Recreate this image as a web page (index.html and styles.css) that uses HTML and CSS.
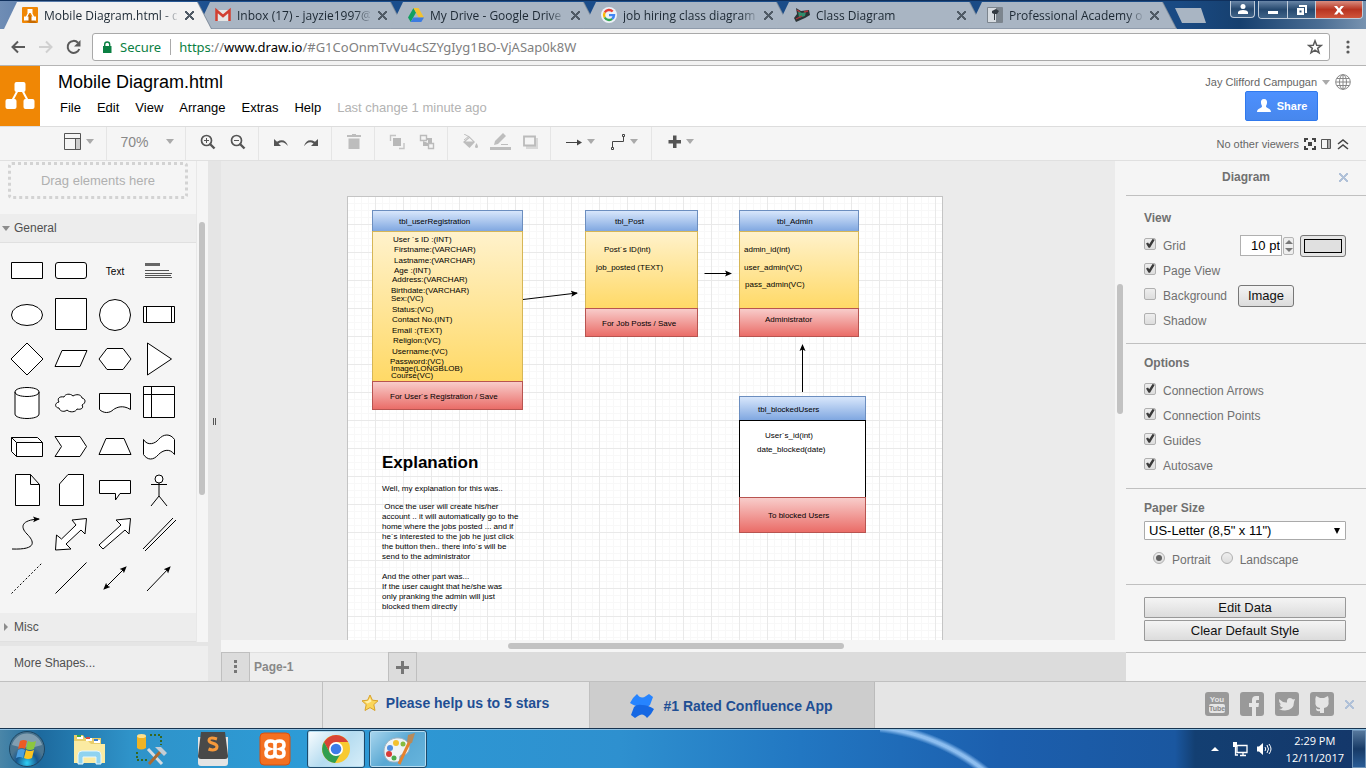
FILE: index.html
```html
<!DOCTYPE html>
<html lang="en">
<head>
<meta charset="utf-8">
<title>Mobile Diagram.html - draw.io</title>
<link rel="stylesheet" href="styles.css">
</head>
<body>
<svg class="defs" width="0" height="0" aria-hidden="true">
  <defs>
    <marker id="arrow" viewBox="0 0 8 8" refX="6" refY="4" markerWidth="8" markerHeight="8" markerUnits="userSpaceOnUse" orient="auto-start-reverse"><path d="M0 1L7 4L0 7L1.500 4Z"/></marker>
    <linearGradient id="blue" x2="0" y2="1"><stop stop-color="#dae8fc"/><stop offset="1" stop-color="#7ea6e0"/></linearGradient>
    <linearGradient id="yellow" x2="0" y2="1"><stop stop-color="#fff2cc"/><stop offset="1" stop-color="#ffd966"/></linearGradient>
    <linearGradient id="red" x2="0" y2="1"><stop stop-color="#f8cecc"/><stop offset="1" stop-color="#ea6b66"/></linearGradient>
  </defs>
</svg>

<div class="tabstrip">
  <div class="tabs">
    <div class="tab tab-active">
      <svg class="favicon" viewBox="0 0 16 16"><rect width="16" height="16" rx="1" fill="#f08705"/><path d="M6 6l9 10H8L2 13z" fill="#c76a00"/><path d="M7 5l-3 6M9 5l3 6" stroke="#fff" stroke-width="1.500"/><path d="M5.500 2h5v4h-5zM2 9.500h4.500v4H2zM9.500 9.500H14v4H9.500z" fill="#fff"/></svg>
      <span class="tab-title">Mobile Diagram.html - draw.io</span><button class="tab-close" aria-label="Close tab"></button>
    </div>
    <div class="tab">
      <svg class="favicon" viewBox="0 0 16 16"><path d="M1 3h14v11H1z" fill="#e5e5e5"/><path d="M1.500 14V3.500L8 9l6.500-5.500V14" fill="none" stroke="#d23f31" stroke-width="2.500"/></svg>
      <span class="tab-title">Inbox (17) - jayzie1997@gmail.com</span><button class="tab-close" aria-label="Close tab"></button>
    </div>
    <div class="tab">
      <svg class="favicon" viewBox="0 0 16 16"><path d="M5.500 1L0 10.500 2.700 15 8 5.500z" fill="#11a05f"/><path d="M5.500 1h5L16 10.500h-5.300z" fill="#f3c331"/><path d="M5.300 10.500H16L13.300 15H2.700z" fill="#3c7be0"/></svg>
      <span class="tab-title">My Drive - Google Drive</span><button class="tab-close" aria-label="Close tab"></button>
    </div>
    <div class="tab">
      <svg class="favicon" viewBox="0 0 16 16"><circle cx="8" cy="8" r="8" fill="#eef2f8"/><g fill="none" stroke-width="2.400"><path d="M11.700 4.500A5 5 0 0 0 3.700 5.500" stroke="#e94235"/><path d="M3.700 5.500a5 5 0 0 0 0 5" stroke="#fabb05"/><path d="M3.700 10.500a5 5 0 0 0 7.500 1.300" stroke="#34a853"/><path d="M11.200 11.800A5 5 0 0 0 13 8.100H8" stroke="#4285f4"/></g></svg>
      <span class="tab-title">job hiring class diagram example</span><button class="tab-close" aria-label="Close tab"></button>
    </div>
    <div class="tab">
      <svg class="favicon" viewBox="0 0 16 16"><path d="M2 1l5 3 8-1 1 5-5 3-9 4-2-4 3-4z" fill="#2b3436"/><path d="M4 4l4 2 4-1-1 4-6 2z" fill="#2f8c6c"/><path d="M3 3l3 2M10 5l4-1M2 12l6-3" stroke="#b2313a" stroke-width="1.300"/></svg>
      <span class="tab-title">Class Diagram</span><button class="tab-close" aria-label="Close tab"></button>
    </div>
    <div class="tab">
      <svg class="favicon" viewBox="0 0 16 16"><rect width="16" height="16" rx="1" fill="#7c858e"/><rect x="1" y="1" width="8" height="14" fill="#d6dbe0"/><path d="M5 4l4-2 3 2-2 3H8v6H7V7L5 6z" fill="#333a42"/></svg>
      <span class="tab-title">Professional Academy of Design</span><button class="tab-close" aria-label="Close tab"></button>
    </div>
    <button class="new-tab" aria-label="New tab"></button>
  </div>
  <div class="window-controls">
    <button class="wc wc-user" aria-label="Profile"><svg width="12" height="12" viewBox="0 0 12 12"><circle cx="6" cy="3.500" r="2.500"/><path d="M1 11V9q1-2 5-2t5 2v2z"/></svg></button>
    <div class="wc-group">
      <button class="wc" aria-label="Minimize"><svg width="12" height="12" viewBox="0 0 12 12"><path d="M1 7h10v3H1z"/></svg></button>
      <button class="wc" aria-label="Restore"><svg width="12" height="12" viewBox="0 0 12 12"><path d="M3 1h8v8H9V3H3zM1 4h7v7H1zM3.500 6.500v2h2v-2z" fill-rule="evenodd"/></svg></button>
      <button class="wc wc-close" aria-label="Close"><svg width="12" height="12" viewBox="0 0 12 12"><path d="M1 2h3l2 2.500L8 2h3L7.700 6 11 10.500H8L6 8l-2 2.500H1L4.300 6z"/></svg></button>
    </div>
  </div>
</div>

<div class="addressbar">
  <button class="nav" aria-label="Back"><svg width="16" height="16" viewBox="0 0 16 16"><path d="M15 8H3M8 2.500L2.500 8 8 13.500" stroke="#5a5a5a"/></svg></button>
  <button class="nav" aria-label="Forward"><svg width="16" height="16" viewBox="0 0 16 16"><path d="M1 8h12M8 2.500L13.500 8 8 13.500" stroke="#d0d0d0"/></svg></button>
  <button class="nav" aria-label="Reload"><svg width="16" height="16" viewBox="0 0 16 16"><path d="M13.300 10A6 6 0 1 1 12 3.700" stroke="#5a5a5a"/><path d="M14.500 1v6.500H8z" fill="#5a5a5a"/></svg></button>
  <div class="urlbox">
    <svg class="lock" width="10" height="12" viewBox="0 0 10 12"><path d="M1 5h8.500v7H1z" fill="#0b8043"/><path d="M2.700 5V3.500a2.500 2.500 0 0 1 5 0V5" fill="none" stroke="#0b8043" stroke-width="1.400"/></svg>
    <span class="secure">Secure</span>
    <span class="url"><span class="scheme">https</span>://<span class="host">www.draw.io</span>/#G1CoOnmTvVu4cSZYgIyg1BO-VjASap0k8W</span>
    <svg class="star" width="16" height="16" viewBox="0 0 16 16"><path d="M8 1.800l1.700 4.400 4.700.2-3.700 2.900 1.300 4.500L8 11.200l-4 2.600 1.300-4.500L1.600 6.400l4.700-.2z" fill="none" stroke="#5a5a5a" stroke-width="1.500"/></svg>
  </div>
  <button class="kebab" aria-label="Menu"><svg width="4" height="14" viewBox="0 0 4 14" fill="#5a5a5a"><circle cx="2" cy="2" r="1.600"/><circle cx="2" cy="7" r="1.600"/><circle cx="2" cy="12" r="1.600"/></svg></button>
</div>

<header class="header">
  <a class="logo" href="#" aria-label="draw.io"><svg width="32" height="32" viewBox="0 0 32 32"><path d="M15 9L8 22M17 9l7 13" stroke="#fff" stroke-width="2"/><g fill="#fff"><rect x="10.500" y="3" width="11" height="10" rx="2"/><rect x="1.500" y="20" width="11" height="10" rx="2"/><rect x="19.500" y="20" width="11" height="10" rx="2"/></g></svg></a>
  <div class="header-main">
    <h1 class="doc-title">Mobile Diagram.html</h1>
    <nav class="menu"><a href="#">File</a><a href="#">Edit</a><a href="#">View</a><a href="#">Arrange</a><a href="#">Extras</a><a href="#">Help</a><span class="status">Last change 1 minute ago</span></nav>
  </div>
  <div class="account">
    <div class="account-row"><a href="#">Jay Clifford Campugan</a><i class="caret"></i>
      <svg width="16" height="16" viewBox="0 0 16 16" fill="none" stroke="#888"><circle cx="8" cy="8" r="7.300"/><ellipse cx="8" cy="8" rx="3.500" ry="7.300"/><path d="M8 1v14M1 8h14M2 4.500h12M2 11.500h12"/></svg></div>
    <button class="share"><svg width="16" height="16" viewBox="0 0 16 16" fill="#fff"><path d="M8 1c2.500 0 3.300 1.800 3 4-.2 1.800-1 2.600-1 3.500 0 1.800 5 1.600 5 5.500H1c0-3.900 5-3.700 5-5.500 0-.9-.8-1.700-1-3.500-.3-2.200.5-4 3-4z"/></svg>Share</button>
  </div>
</header>

<div class="toolbar">
  <div class="group group-first"><button class="tool tool-wide" aria-label="View"><svg width="18" height="18" viewBox="0 0 18 18"><path d="M12 6h5v11h-5z" fill="#ccc"/><path d="M.500.500h16v16H.500zM0 5.500h17M11.500 6v11" fill="none" stroke="#555"/></svg><i class="caret"></i></button></div>
  <div class="group"><button class="tool tool-zoom">70%<i class="caret"></i></button></div>
  <div class="group">
    <button class="tool" aria-label="Zoom in"><svg width="16" height="16" viewBox="0 0 16 16"><path d="M9.500 9.500l5 5" stroke="#555" stroke-width="2.400"/><circle cx="6.500" cy="6.500" r="5" fill="none" stroke="#555" stroke-width="1.700"/><path d="M4 6.500h5M6.500 4v5" stroke="#555"/></svg></button>
    <button class="tool" aria-label="Zoom out"><svg width="16" height="16" viewBox="0 0 16 16"><path d="M9.500 9.500l5 5" stroke="#555" stroke-width="2.400"/><circle cx="6.500" cy="6.500" r="5" fill="none" stroke="#555" stroke-width="1.700"/><path d="M4 6.500h5" stroke="#555"/></svg></button>
  </div>
  <div class="group">
    <button class="tool" aria-label="Undo"><svg width="16" height="12" viewBox="0 0 16 12" fill="#555"><path d="M1 3v7h7L5.500 7.500Q10 4 15 10 12 1.500 4 5.700z"/></svg></button>
    <button class="tool" aria-label="Redo"><svg width="16" height="12" viewBox="0 0 16 12" fill="#555"><path d="M15 3v7H8l2.500-2.500Q6 4 1 10 4 1.500 12 5.700z"/></svg></button>
  </div>
  <div class="group"><button class="tool" aria-label="Delete"><svg width="14" height="16" viewBox="0 0 14 16" fill="#bdbdbd"><path d="M5 0h4v1h5v2H0V1h5zM1.500 4.500h11V15h-11z"/></svg></button></div>
  <div class="group">
    <button class="tool" aria-label="To front"><svg width="16" height="16" viewBox="0 0 16 16"><path d="M4 4h8v8H4z" fill="#b8b8b8"/><path d="M7 1.500H1.500V7M10 14.500h5V9" fill="none" stroke="#c4c4c4" stroke-width="1.400"/></svg></button>
    <button class="tool" aria-label="To back"><svg width="16" height="16" viewBox="0 0 16 16"><path d="M7 4h6v6H9V6H7zM4 7v5h5V9z" fill="#b8b8b8"/><path d="M1.500 1.500h6v5h-6zM9.500 9.500h5v5h-5z" fill="#f5f5f5" stroke="#bbb" stroke-width="1.400"/></svg></button>
  </div>
  <div class="group">
    <button class="tool" aria-label="Fill color"><svg width="18" height="16" viewBox="0 0 18 16" fill="#bdbdbd"><path d="M2 8l6.500-5.500L14 8l-5.500 6z"/><path d="M8.500 3L3 0M8 2L3 6" fill="none" stroke="#bdbdbd"/><path d="M15.500 9q3 5 0 5t0-5z"/><path d="M4.500 7.500l4-3.500 3.500 3.500z" fill="#f5f5f5"/></svg></button>
    <button class="tool" aria-label="Line color"><svg width="22" height="20" viewBox="0 0 22 20" fill="#bdbdbd"><path d="M5 13l1-4 8-8 3 3-8 8zM1 15h21v3H1zM12 12h7v1h-7z"/></svg></button>
    <button class="tool" aria-label="Shadow"><svg width="16" height="16" viewBox="0 0 16 16"><path d="M4 4h12v11H4z" fill="#d8d8d8"/><path d="M2 2.500h11v9H2z" fill="#f5f5f5" stroke="#bbb" stroke-width="1.800"/></svg></button>
  </div>
  <div class="group">
    <button class="tool tool-wide" aria-label="Connection"><svg width="18" height="8" viewBox="0 0 18 8"><path d="M1 4.500h13" stroke="#444"/><path d="M12 1.500l5 3-5 3z" fill="#444"/></svg><i class="caret"></i></button>
    <button class="tool tool-wide" aria-label="Waypoints"><svg width="16" height="16" viewBox="0 0 16 16" fill="none" stroke="#444"><path d="M2.500 13V7.500h11V3M1.500 13.500h2v2h-2zM12.500.500h2v2h-2z"/></svg><i class="caret"></i></button>
  </div>
  <div class="group group-last"><button class="tool tool-wide" aria-label="Insert"><svg width="14" height="14" viewBox="0 0 14 14"><path d="M5 .500h3.500V5H13v3.500H8.500V13H5V8.500H.500V5H5z" fill="#555"/></svg><i class="caret"></i></button></div>
  <div class="viewers">No other viewers
    <svg width="12" height="12" viewBox="0 0 12 12" fill="#444"><path d="M0 0h4v2H2v2H0zM8 0h4v4h-2V2H8zM0 8h2v2h2v2H0zM10 8h2v4H8v-2h2zM4 4h4v4H4z"/></svg>
    <svg width="11" height="12" viewBox="0 0 11 12"><path d="M6 1h4v9H6z" fill="#aaa"/><path d="M.500 1.500h9v9h-9zM6.500 1v10" fill="none" stroke="#555"/></svg>
    <svg width="12" height="12" viewBox="0 0 12 12" fill="none" stroke="#444" stroke-width="1.600"><path d="M1 6l5-4 5 4M1 11l5-4 5 4"/></svg>
  </div>
</div>

<main class="workspace">
  <aside class="sidebar">
    <div class="palette-scroll">
      <div class="palette">
        <div class="dropzone">Drag elements here</div>
        <button class="section-head"><i class="tri tri-open"></i>General</button>
        <div class="shapes">
          <svg viewBox="-17 -17 34 34"><path d="M-15.500-8.500h31v16h-31z"/></svg>
          <svg viewBox="-17 -17 34 34"><rect x="-15.500" y="-8.500" width="31" height="16" rx="2.500"/></svg>
          <div class="text-shape">Text</div>
          <svg viewBox="-17 -17 34 34"><g stroke="none" fill="#333"><path d="M-14-8h15v3h-15z" fill="#666"/><path d="M-14-1h24v1h-24zM-14 2h27v1h-27zM-14 4h26v1h-26zM-14 6h27v1h-27z" fill="#555"/></g></svg>
          <svg viewBox="-17 -17 34 34"><ellipse rx="15.500" ry="10.500"/></svg>
          <svg viewBox="-17 -17 34 34"><path d="M-15.500-16.500h31v31h-31z"/></svg>
          <svg viewBox="-17 -17 34 34"><circle r="15.500"/></svg>
          <svg viewBox="-17 -17 34 34"><path d="M-15.500-8.500h31v16h-31zM-12.500-8.500v16M12.500-8.500v16"/></svg>
          <svg viewBox="-17 -17 34 34"><path d="M0-16L16 0 0 16-16 0z"/></svg>
          <svg viewBox="-17 -17 34 34"><path d="M-9-8.500h25L9 7.500h-25z"/></svg>
          <svg viewBox="-17 -17 34 34"><path d="M-16 0l8-10.500H8L16 0 8 10.500H-8z"/></svg>
          <svg viewBox="-17 -17 34 34"><path d="M-11.500-16l24 16-24 16z"/></svg>
          <svg viewBox="-17 -17 34 34"><path d="M-12-11v22c0 6 24 6 24 0v-22c0-6-24-6-24 0c0 6 24 6 24 0"/></svg>
          <svg viewBox="-17 -17 34 34"><path d="M-7-6c-5-1-7 2-5 5-5 1-4 6 0 6 1 4 6 4 8 2 3 3 9 2 10-1 4 1 7-1 5-4 4-2 4-6 0-7-1-4-6-4-9-2-3-3-8-2-9 1z"/></svg>
          <svg viewBox="-17 -17 34 34"><path d="M-15.500-9.500h31v16c-8-5-14-2-17 0-4 4-10 4-14 0z"/></svg>
          <svg viewBox="-17 -17 34 34"><path d="M-15.500-16.500h31v31h-31zM-7.500-16.500v31M-15.500-8.500h31"/></svg>
          <svg viewBox="-17 -17 34 34"><path d="M-15.500-9.500h26l5 5v14h-26l-5-5zM-15.500-9.500l5 5h26M-10.500-4.500v14"/></svg>
          <svg viewBox="-17 -17 34 34"><path d="M-16-10.500H9L15.500-.5 9 9.500h-25L-9.500-.5z"/></svg>
          <svg viewBox="-17 -17 34 34"><path d="M-9-8.500H9l7 16h-32z"/></svg>
          <svg viewBox="-17 -17 34 34"><path d="M-15.500-7.500c4 7 12 4 15 0 5-6 12-6 16 0v15c-5-7-12-4-16 0-5 6-11 6-15 0z"/></svg>
          <svg viewBox="-17 -17 34 34"><path d="M-11.500-16.500h15l9 10v21h-24zM3.500-16.500v10h9"/></svg>
          <svg viewBox="-17 -17 34 34"><path d="M-3-16.500h15.500v31h-24V-7z"/></svg>
          <svg viewBox="-17 -17 34 34"><path d="M-15.500-10.500h31v13H5L.500 9V2.500h-16z"/></svg>
          <svg viewBox="-17 -17 34 34"><circle cy="-12" r="4"/><path d="M0-8V5M-8-6.500H8M0 5l-8 10M0 5l8 10"/></svg>
          <svg viewBox="-17 -17 34 34" class="line"><path d="M-15 14C11 15 7 6 0-1S-6-15 12-16" marker-end="url(#arrow)"/></svg>
          <svg viewBox="-17 -17 34 34"><path d="M15.500-16.500L14-1l-4-4L-5 9l5 5-15.500 1 1-15 5 4L5-10l-4-5z"/></svg>
          <svg viewBox="-17 -17 34 34"><path d="M15.500-16.500L14-1l-4-4-22 19-4-4L6-10 1-15z"/></svg>
          <svg viewBox="-17 -17 34 34" class="line"><path d="M-16 14l30-31M-14 16l31-31"/></svg>
          <svg viewBox="-17 -17 34 34" class="line"><path d="M-15.500 14.500l31-31" stroke-dasharray="2 2"/></svg>
          <svg viewBox="-17 -17 34 34" class="line"><path d="M-15.500 14.500l31-31"/></svg>
          <svg viewBox="-17 -17 34 34" class="line"><path d="M-11 10L11-12" marker-start="url(#arrow)" marker-end="url(#arrow)"/></svg>
          <svg viewBox="-17 -17 34 34" class="line"><path d="M-12 12l23-24" marker-end="url(#arrow)"/></svg>
        </div>
        <button class="section-head"><i class="tri tri-closed"></i>Misc</button>
      </div>
      <div class="vscroll"><div class="vthumb vthumb-side"></div></div>
    </div>
    <a class="more-shapes" href="#">More Shapes...</a>
  </aside>
  <div class="splitter"><i></i><i></i></div>

  <section class="editor">
    <div class="canvas-row">
      <div class="canvas">
        <div class="paper">
          <svg class="diagram" width="594" height="462" viewBox="348 197 594 462">
            <g stroke="#6c8ebf" fill="url(#blue)"><rect x="372.500" y="210.500" width="150" height="21"/><rect x="585.500" y="210.500" width="112" height="21"/><rect x="739.500" y="210.500" width="119" height="21"/><rect x="739.500" y="396.500" width="126" height="24"/></g>
            <g stroke="#d6b656" fill="url(#yellow)"><rect x="372.500" y="231.500" width="150" height="150"/><rect x="585.500" y="231.500" width="112" height="77"/><rect x="739.500" y="231.500" width="119" height="77"/></g>
            <rect x="739.500" y="420.500" width="126" height="77" fill="#fff" stroke="#000"/>
            <g stroke="#b85450" fill="url(#red)"><rect x="372.500" y="381.500" width="150" height="28"/><rect x="585.500" y="308.500" width="112" height="28"/><rect x="739.500" y="308.500" width="119" height="28"/><rect x="739.500" y="497.500" width="126" height="35"/></g>
            <g stroke="#000" fill="none"><path d="M523 299.500L577 293" marker-end="url(#arrow)"/><path d="M704.500 273.500H731" marker-end="url(#arrow)"/><path d="M802.500 392V345" marker-end="url(#arrow)"/></g>
            <g class="labels">
              <text x="399" y="224">tbl_userRegistration</text>
              <text x="393" y="242">User ´s ID :(INT)</text>
              <text x="394" y="252">Firstname:(VARCHAR)</text>
              <text x="394" y="263">Lastname:(VARCHAR)</text>
              <text x="394" y="273">Age :(INT)</text>
              <text x="392" y="282">Address:(VARCHAR)</text>
              <text x="391" y="293">Birthdate:(VARCHAR)</text>
              <text x="391" y="301">Sex:(VC)</text>
              <text x="392" y="312">Status:(VC)</text>
              <text x="392" y="322">Contact No.(INT)</text>
              <text x="392" y="333">Email :(TEXT)</text>
              <text x="393" y="343">Religion:(VC)</text>
              <text x="392" y="354">Username:(VC)</text>
              <text x="390" y="364">Password:(VC)</text>
              <text x="391" y="371">Image(LONGBLOB)</text>
              <text x="391" y="378">Course(VC)</text>
              <text x="390" y="399">For User´s Registration / Save</text>
              <text x="615" y="224">tbl_Post</text>
              <text x="604" y="252">Post´s ID(int)</text>
              <text x="596" y="270">job_posted (TEXT)</text>
              <text x="602" y="326">For Job Posts / Save</text>
              <text x="777" y="224">tbl_Admin</text>
              <text x="744" y="252">admin_id(int)</text>
              <text x="744" y="270">user_admin(VC)</text>
              <text x="745" y="287">pass_admin(VC)</text>
              <text x="765" y="322">Administrator</text>
              <text x="758" y="412">tbl_blockedUsers</text>
              <text x="765" y="438">User´s_id(int)</text>
              <text x="757" y="452">date_blocked(date)</text>
              <text x="768" y="518">To blocked Users</text>
            </g>
          </svg>
          <div class="note">
            <h2>Explanation</h2>
            <p>Well, my explanation for this was..</p>
            <p>&nbsp;Once the user will create his/her<br>account .. it will automatically go to the<br>home where the jobs posted ... and if<br>he´s interested to the job he just click<br>the button then.. there info´s will be<br>send to the administrator<br><br>And the other part was...<br>If the user caught that he/she was<br>only pranking the admin will just<br>blocked them directly</p>
          </div>
        </div>
      </div>
      <div class="vscroll"><div class="vthumb vthumb-canvas"></div></div>
    </div>
    <div class="hscroll"><div class="hthumb"></div></div>
    <div class="pages">
      <button class="page-btn" aria-label="Pages"><svg width="4" height="14" viewBox="0 0 4 14" fill="#777"><path d="M0 0h3v3H0zM0 5h3v3H0zM0 10h3v3H0z"/></svg></button>
      <button class="page-tab">Page-1</button>
      <button class="page-btn" aria-label="Add page"><svg width="13" height="13" viewBox="0 0 13 13"><path d="M5 0h3v5h5v3H8v5H5V8H0V5h5z" fill="#777"/></svg></button>
    </div>
  </section>

  <aside class="format">
    <div class="format-head"><span>Diagram</span><button class="format-close" aria-label="Close panel"></button></div>
    <section class="panel panel-view">
      <h3>View</h3>
      <div class="row"><label><input type="checkbox" checked>Grid</label>
        <div class="grid-size"><input class="num" type="text" value="10 pt" aria-label="Grid size"><button class="stepper" aria-label="Change grid size"><i class="up"></i><i class="down"></i></button></div>
        <button class="swatch" aria-label="Grid color"><span></span></button></div>
      <div class="row"><label><input type="checkbox" checked>Page View</label></div>
      <div class="row"><label><input type="checkbox">Background</label><button class="btn image-btn">Image</button></div>
      <div class="row"><label><input type="checkbox">Shadow</label></div>
    </section>
    <section class="panel panel-options">
      <h3>Options</h3>
      <div class="row"><label><input type="checkbox" checked>Connection Arrows</label></div>
      <div class="row"><label><input type="checkbox" checked>Connection Points</label></div>
      <div class="row"><label><input type="checkbox" checked>Guides</label></div>
      <div class="row"><label><input type="checkbox" checked>Autosave</label></div>
    </section>
    <section class="panel panel-paper">
      <h3><label for="paper">Paper Size</label></h3>
      <div class="select"><select id="paper"><option>US-Letter (8,5" x 11")</option></select></div>
      <div class="radios"><label><input type="radio" name="orient" checked>Portrait</label><label><input type="radio" name="orient">Landscape</label></div>
    </section>
    <section class="panel panel-actions"><button class="btn">Edit Data</button><button class="btn">Clear Default Style</button></section>
  </aside>
</main>

<footer class="promo">
  <a class="promo-item promo-stars" href="#"><svg width="18" height="18" viewBox="0 0 18 18"><path d="M9 1l2.400 5.200 5.600.6-4.200 3.800 1.200 5.900L9 13.600l-5 2.900 1.200-5.900L1 6.800l5.600-.6z" fill="#fbd65a" stroke="#d9a32b"/><path d="M9 4l1.500 3.500-4 2L3.500 7.500l3.500-.5z" fill="#fff0b0"/></svg>Please help us to 5 stars</a>
  <a class="promo-item promo-app" href="#"><svg width="26" height="26" viewBox="0 0 26 26"><path d="M4 5L8 1q4 6 9 2l3-2 4 3-3 8q-3 3-8 2-6 0-12-4z" fill="#2684ff"/><path d="M22 21l-4 4q-4-6-9-2l-3 2-4-3 3-8q3-3 8-2 6 0 12 4z" fill="#1668e3"/></svg>#1 Rated Confluence App</a>
  <div class="social">
    <a href="#" aria-label="YouTube"><svg viewBox="0 0 24 24"><rect width="24" height="24" rx="3" fill="#999"/><rect x="4" y="12" width="16" height="9" rx="2" fill="#e5e5e5"/><text x="12" y="10" class="yt yt-top">You</text><text x="12" y="19" class="yt yt-bot">Tube</text></svg></a>
    <a href="#" aria-label="Facebook"><svg viewBox="0 0 24 24"><rect width="24" height="24" rx="3" fill="#999"/><path d="M12 24v-9H9v-4h3V8q0-4 4-4h3v4h-2q-1 0-1 1v2h3l-.500 4H16v9z" fill="#e5e5e5"/></svg></a>
    <a href="#" aria-label="Twitter"><svg viewBox="0 0 24 24"><rect width="24" height="24" rx="3" fill="#999"/><path d="M4 7q4 4 8 3.500Q11.500 6 15 6q2 0 3 1.500l2-.5-1 3Q19 18 10 18.500 7 18.500 4 17q3 0 4-1.500-3-.500-3.500-3h1.500Q3.500 10 4 7z" fill="#e5e5e5"/></svg></a>
    <a href="#" aria-label="GitHub"><svg viewBox="0 0 24 24"><rect width="24" height="24" rx="3" fill="#999"/><path d="M6 4l4 2h4l4-2q1 3 .5 5 1 6-4.500 7v5h-4v-2q-4 1-4-3 2 2 4 1V16Q4.500 15 5.500 9 5 7 6 4z" fill="#e5e5e5"/></svg></a>
    <button class="format-close promo-close" aria-label="Dismiss"></button>
  </div>
</footer>

<div class="taskbar">
  <button class="start" aria-label="Start"><svg width="38" height="38" viewBox="0 0 38 38"><defs><radialGradient id="orb" cy=".9"><stop stop-color="#2fd0f5"/><stop offset=".6" stop-color="#17578f"/><stop offset="1" stop-color="#4b7590"/></radialGradient></defs><circle cx="19" cy="19" r="17.500" fill="url(#orb)" stroke="#1c4663"/><path d="M4 15a15.500 15.500 0 0 1 30 0q-15 5-30 0z" fill="#fff" opacity=".3"/><path d="M12 11q4-2 7 0l-2 8q-3-2-7 0z" fill="#ee5a24"/><path d="M20 11q4 2 8 0l-2 8q-4 2-8 0z" fill="#8cc63f"/><path d="M10 20q4-2 7 0l-2 8q-3-2-7 0z" fill="#4b9fe0"/><path d="M18 20q4 2 8 0l-2 8q-4 2-8 0z" fill="#fcc421"/></svg></button>
  <button class="app" aria-label="Explorer"><svg width="34" height="34" viewBox="0 0 34 34"><path d="M2 7V3h9l2 3h16v25H2z" fill="#e9cd6a"/><path d="M5 4h6v3H5zM14 6h6v3h-6zM22 8h6v3h-6z" fill="#fff"/><path d="M5 3h4v2H5z" fill="#39a845"/><path d="M14 5h4v2h-4z" fill="#d94b3e"/><path d="M22 7h4v2h-4z" fill="#3a7bd0"/><path d="M2 9h14l3 3h14v19H2z" fill="#fbeba2"/><path d="M6 32v-9q0-4 4-4h15q4 0 4 4v9h-5v-7H11v7z" fill="#8fd3f0" stroke="#e6f7fd"/></svg></button>
  <button class="app" aria-label="Database tools"><svg width="34" height="34" viewBox="0 0 34 34"><path d="M3 4v12q4 3 9 0V4z" fill="#f0b323"/><ellipse cx="7.500" cy="4" rx="4.500" ry="2" fill="#ffe08a"/><path d="M16 3h11v10M3 20v8h10" fill="none" stroke="#37671f" stroke-width="2" stroke-dasharray="2 2"/><path d="M14 17l14 15" stroke="#d5dbe0" stroke-width="3"/><path d="M27 19L15 32" stroke="#a96a31" stroke-width="3"/><path d="M21 15h6l6 6-3 3-4-4z" fill="#c5cdd4"/></svg></button>
  <button class="app" aria-label="Sublime Text"><svg width="32" height="36" viewBox="0 0 32 36"><path d="M1 6h30v26q0 3-3 3H4q-3 0-3-3z" fill="#e4e4e4"/><path d="M4 1h24l3 24q0 3-3 3H4q-3 0-3-3z" fill="#494949"/><path d="M20 8q-8-2.500-8 1.500c0 3.500 8 2 8 6s-5 4-8.500 2.500" fill="none" stroke="#f5983b" stroke-width="3"/></svg></button>
  <button class="app" aria-label="XAMPP"><svg width="32" height="34" viewBox="0 0 32 34"><rect x="1" y="1" width="30" height="32" rx="4" fill="#f37021" stroke="#d8500f"/><path d="M16 12Q16 9 11.500 9T7 13q0 3 3 4-3 1-3 4 0 4 4.500 4T16 21V12Q16 9 20.500 9T25 13q0 3-3 4 3 1 3 4 0 4-4.500 4T16 21" fill="none" stroke="#fff" stroke-width="3.600"/></svg></button>
  <button class="task task-active" aria-label="Chrome"><svg width="30" height="30" viewBox="0 0 30 30"><circle cx="15" cy="15" r="14" fill="#f8ca32"/><path d="M3 8a14 14 0 0 1 24.200 0H15L9 19z" fill="#d94436"/><path d="M3 8a14 14 0 0 0 11 21l6-10-5 2-6-2z" fill="#2f9e50"/><circle cx="15" cy="15" r="7" fill="#fff"/><circle cx="15" cy="15" r="5.300" fill="#3c7ce8"/></svg></button>
  <button class="task" aria-label="Paint"><svg width="34" height="34" viewBox="0 0 34 34"><path d="M15 6C26 5 31 14 27 20c-3 5-6 1-8 4-1 3 1 6-4 6C6 31 3 25 3 19S7 7 15 6z" fill="#eef3f6" stroke="#9eb2c0"/><circle cx="15" cy="11" r="3" fill="#f3c02f"/><circle cx="22" cy="12" r="2.500" fill="#86bb3f"/><circle cx="9" cy="16" r="3" fill="#4f8de0"/><circle cx="8" cy="22" r="3" fill="#d83b36"/><circle cx="13" cy="26" r="2.500" fill="#4aaa4c"/><path d="M29 9L18 32" stroke="#e3822e" stroke-width="3"/><path d="M26 10l1-7 7-2-3 10z" fill="#b78a5a"/></svg></button>
  <div class="tray">
    <svg width="8" height="6" viewBox="0 0 8 6"><path d="M0 5l4-4 4 4z" fill="#fff"/></svg>
    <svg width="16" height="16" viewBox="0 0 16 16"><path d="M5 4.500h10v7H5zM8 14.500h6M11 12v2M3.500 6v8H6" fill="none" stroke="#fff" stroke-width="1.300"/><path d="M1 1h4v5H1z" fill="#fff"/></svg>
    <svg width="16" height="16" viewBox="0 0 16 16"><path d="M1 5.500h2L7 2v12l-4-3.500H1z" fill="#fff"/><path d="M9 6q1.500 2 0 4M11 4q3 4 0 8M13 3q4 5 0 10" fill="none" stroke="#fff"/></svg>
    <div class="clock">2:29 PM<br>12/11/2017</div>
  </div>
  <button class="show-desktop" aria-label="Show desktop"></button>
</div>
</body>
</html>
```
FILE: styles.css
```css
* { box-sizing: border-box; }
body { margin: 0; height: 100vh; display: flex; flex-direction: column; overflow: hidden; font-family: "Liberation Sans", Arial, sans-serif; font-size: 12px; color: #707070; background: #fff; }
button, input, select { font: inherit; color: inherit; margin: 0; padding: 0; border: 0; background: none; }
a { color: inherit; text-decoration: none; }
svg { display: block; flex: none; }
h1, h2, h3, p { margin: 0; }
.defs { position: absolute; }

/* Browser tabs */
.tabstrip { flex: none; height: 29px; display: flex; justify-content: space-between; background: linear-gradient(90deg, #6f8db5 0, #5f80ad 30px, #1b4f8f 210px, #1a4a83 1180px, #16406f 1240px, #4a6d93 1320px, #7893b0 100%); border-top: 1px solid #10305c; font-family: "Open Sans", "Noto Sans", sans-serif; color: #1c2833; }
.tabs { display: flex; padding: 1px 0 0 4px; }
.tab { position: relative; z-index: 1; width: 207px; margin-right: -14px; display: flex; align-items: center; gap: 6px; padding: 0 16px 1px 18px; filter: drop-shadow(1px 0 0 #7f8c9b); }
.tab::before { content: ""; position: absolute; z-index: -1; inset: 0; background: #a9b5c3; border-bottom: 1px solid #8f9bab; clip-path: polygon(13px 0, calc(100% - 14px) 0, 100% 100%, 0 100%); }
.tab-active { z-index: 2; }
.tab-active::before { background: #f2f2f2; border: 0; }
.favicon { width: 16px; height: 16px; }
.tab-title { flex: 1; overflow: hidden; white-space: nowrap; mask-image: linear-gradient(90deg, #000 118px, transparent 136px); }
.tab-close { width: 12px; height: 12px; }
.tab-close, .format-close { background: linear-gradient(45deg, transparent 44%, currentColor 44% 56%, transparent 56%), linear-gradient(-45deg, transparent 44%, currentColor 44% 56%, transparent 56%); }
.tab-close { color: #505b66; background-size: 9px 9px; background-position: center; background-repeat: no-repeat; }
.new-tab { width: 31px; height: 15px; margin: 6px 0 0 13px; background: #a9b5c3; clip-path: polygon(0 0, 26px 0, 100% 100%, 7px 100%); }
.window-controls { display: flex; gap: 3px; padding-right: 3px; }
.wc { width: 28px; height: 17px; display: flex; align-items: center; justify-content: center; fill: #fff; background: linear-gradient(#6885a6, #26496f 50%, #3f6388); }
.wc-user { width: 25px; border: 1px solid #c0ccda; border-top: 0; border-radius: 0 0 4px 4px; }
.wc-group { display: flex; height: 18px; border: 1px solid #c0ccda; border-top: 0; border-radius: 0 0 4px 4px; overflow: hidden; }
.wc-group .wc + .wc { border-left: 1px solid #c0ccda; }
.wc-group .wc-close { width: 47px; background: linear-gradient(#d98d80, #b83421 50%, #d0553b); }

/* Address bar */
.addressbar { flex: none; height: 37px; display: flex; align-items: center; padding: 0 16px 0 4px; background: #f2f2f2; border-bottom: 1px solid #b5b5b5; font-family: "Noto Sans", "Open Sans", sans-serif; font-size: 13px; }
.nav { width: 28px; display: flex; justify-content: center; fill: none; stroke-width: 2; }
.urlbox { flex: 1; height: 28px; margin-left: 4px; display: flex; align-items: center; gap: 8px; padding: 0 6px 0 9px; background: #fff; border: 1px solid #a9a9a9; border-radius: 3px; white-space: nowrap; }
.secure { color: #0b8043; padding-right: 9px; border-right: 1px solid #aaa; line-height: 16px; }
.scheme { color: #0b8043; }
.host { color: #000; }
.url { flex: 1; color: #808080; }
.kebab { margin-left: 16px; }

/* Document header */
.header { flex: none; height: 61px; display: flex; background: #fff; border-bottom: 1px solid #ddd; color: #000; }
.logo { width: 40px; display: flex; align-items: center; justify-content: center; background: #f08705; padding-bottom: 2px; }
.header-main { flex: 1; padding: 5px 0 0 18px; }
.doc-title { font-size: 18px; line-height: 22px; font-weight: 400; }
.menu { display: flex; gap: 16px; padding: 7px 0 0 2px; font-size: 13px; line-height: 16px; }
.status { color: #b3b3b3; }
.account { display: flex; flex-direction: column; align-items: flex-end; gap: 1px; padding: 8px 15px 0 0; color: #666; font-size: 11px; }
.account-row { display: flex; align-items: center; gap: 5px; }
.caret { display: block; width: 0; border: 4px solid transparent; border-top: 5px solid #aaa; border-bottom: 0; }
.share { width: 73px; height: 30px; margin-right: 33px; display: flex; align-items: center; justify-content: center; gap: 5px; background: linear-gradient(#4d90fe, #4787ed); border: 1px solid #3079ed; border-radius: 2px; color: #fff; font-weight: 700; }

/* Toolbar */
.toolbar { flex: none; height: 34px; display: flex; background: #f5f5f5; border-bottom: 1px solid #e0e0e0; }
.group { display: flex; padding: 0 5px 0 7px; border-right: 1px solid #e5e5e5; }
.group-first { padding-left: 57px; }
.group-last { border: 0; }
.tool { width: 30px; display: flex; align-items: center; justify-content: center; gap: 4px; padding-bottom: 4px; }
.tool-wide { width: 44px; }
.tool-zoom { width: 66px; gap: 17px; font-size: 14px; color: #888; }
.viewers { margin-left: auto; padding-right: 17px; display: flex; align-items: center; gap: 5px; color: #666; font-size: 11px; }

/* Workspace */
.workspace { flex: 1; min-height: 0; display: flex; }
.sidebar { width: 208px; display: flex; flex-direction: column; background: #f5f5f5; }
.palette-scroll { flex: 1; min-height: 0; display: flex; border-bottom: 4px solid #e5e5e5; }
.palette { flex: 1; overflow: hidden; font-size: 12px; border-right: 1px solid #e8e8e8; }
.dropzone { height: 37px; margin: 1px 8px 15px; display: flex; align-items: center; justify-content: center; border: 3px dotted #d3d3d3; border-radius: 4px; color: #b0b0b0; font-size: 13px; }
.section-head { width: 100%; height: 29px; display: flex; align-items: center; gap: 4px; padding-left: 2px; background: #ededed; border-bottom: 1px solid #e0e0e0; color: #505050; }
.tri { width: 8px; border: 4px solid transparent; }
.tri-open { border-top: 5px solid #8c8c8c; border-bottom: 0; }
.tri-closed { height: 8px; border-left: 4px solid #8c8c8c; border-right: 0; width: 4px; margin: 0 2px; }
.shapes { display: grid; grid-template-columns: repeat(4, 44px); grid-auto-rows: 44px; place-items: center; padding: 6px 5px 12px; }
.shapes svg { width: 34px; height: 34px; fill: #fff; stroke: #000; stroke-width: 1; overflow: visible; }
.shapes .line { fill: none; }
#arrow path { fill: #000; stroke: none; }
.text-shape { font-size: 10px; color: #000; }
.vscroll { width: 11px; padding: 0 3px 0 2px; background: #f5f5f5; }
.vthumb { background: #c2c2c2; border-radius: 3px; }
.vthumb-side { height: 273px; margin-top: 61px; }
.vthumb-canvas { height: 130px; margin-top: 123px; }
.more-shapes { height: 35px; display: flex; align-items: center; padding: 0 0 2px 14px; background: #eee; color: #505050; }
.splitter { width: 13px; display: flex; align-items: center; justify-content: center; gap: 1px; background: #e5e5e5; }
.splitter i { width: 1px; height: 7px; background: #555; }

.editor { flex: 1; min-width: 0; display: flex; flex-direction: column; }
.canvas-row { flex: 1; min-height: 0; display: flex; }
.canvas { flex: 1; min-width: 0; overflow: hidden; padding: 35px 0 0 126px; background: #ebebeb; }
.paper { position: relative; width: 596px; border: 1px solid #c4c4c4; background-color: #fff; background-image: linear-gradient(#e9e9e9 1px, transparent 1px), linear-gradient(90deg, #e9e9e9 1px, transparent 1px), linear-gradient(#f8f8f8 1px, transparent 1px), linear-gradient(90deg, #f8f8f8 1px, transparent 1px); background-size: 28px 28px, 28px 28px, 7px 7px, 7px 7px; background-position: -1px -1px; }
.labels { font-size: 8px; fill: #000; }
.note { position: absolute; left: 34px; top: 256px; color: #000; font-size: 8px; line-height: 10px; white-space: nowrap; }
.note h2 { font-size: 17px; line-height: 20px; margin-bottom: 11px; }
.note p { margin-bottom: 8px; }
.hscroll { height: 12px; padding: 3px 0 0 287px; background: #f5f5f5; }
.hthumb { width: 336px; height: 6px; border-radius: 3px; background: #c2c2c2; }
.pages { height: 29px; display: flex; background: #dcdcdc; }
.page-btn { width: 29px; display: flex; align-items: center; justify-content: center; border: 1px solid #bfbfbf; border-bottom: 0; }
.page-tab { width: 138px; background: #eee; border-top: 1px solid #e0e0e0; text-align: left; padding-left: 4px; font-weight: 700; color: #888; }

/* Format panel */
.format { width: 240px; background: #f5f5f5; }
.format-head { height: 35px; padding: 0 18px 2px; display: grid; grid-template-columns: 1fr auto 1fr; align-items: center; border-bottom: 1px solid #c0c0c0; font-weight: 700; }
.format-head span { grid-column: 2; }
.format-close { justify-self: end; width: 9px; height: 9px; color: #b0c1d8; }
.panel { padding: 10px 20px 10px 18px; border-bottom: 1px solid #c0c0c0; }
.panel-view { padding-top: 13px; }
.panel h3 { font-size: 12px; line-height: 18px; margin-bottom: 6px; }
.row { height: 25px; display: flex; align-items: center; }
.row label { flex: 1; display: flex; align-items: center; gap: 7px; }
input[type="checkbox"], input[type="radio"] { appearance: none; width: 12px; height: 12px; margin-bottom: 4px; border: 1px solid #b0b0b0; border-radius: 2px; background: linear-gradient(#eee, #ddd); }
input[type="radio"] { border-radius: 50%; }
input[type="checkbox"]:checked::after { content: ""; display: block; width: 10px; height: 10px; background: #3a3a3a; clip-path: polygon(10% 50%, 30% 40%, 42% 58%, 75% 5%, 98% 12%, 50% 92%, 36% 92%); }
input[type="radio"]:checked::after { content: ""; display: block; width: 6px; height: 6px; margin: 2px; border-radius: 50%; background: #606060; }
.grid-size { display: flex; align-items: center; gap: 1px; }
.num { width: 42px; height: 21px; background: #fff; border: 1px solid #b0b0b0; text-align: right; font-size: 13px; color: #000; padding-right: 1px; }
.stepper { width: 11px; height: 18px; display: flex; flex-direction: column; align-items: center; justify-content: center; gap: 4px; border: 1px solid #b5b5b5; border-radius: 2px; background: #eee; }
.stepper i { border: 4px solid transparent; width: 0; }
.stepper .up { border-top: 0; border-bottom-color: #777; }
.stepper .down { border-bottom: 0; border-top-color: #777; }
.swatch { width: 46px; height: 22px; margin-left: 6px; padding: 3px; border: 1px solid #777; border-radius: 3px; background: #e5e5e5; }
.swatch span { display: block; height: 14px; border: 1px solid #000; background: #e0e0e0; }
.btn { height: 21px; border: 1px solid #999; border-radius: 1px; background: linear-gradient(#f4f4f4, #dcdcdc); color: #111; font-size: 13px; }
.image-btn { width: 56px; height: 22px; margin-right: 52px; border-color: #777; border-radius: 3px; }
.panel-paper { padding-bottom: 14px; }
.panel-paper h3 { margin-bottom: 4px; }
.select { position: relative; }
.select::after { content: ""; position: absolute; right: 6px; top: 7px; border: 3px solid transparent; border-top: 6px solid #000; border-bottom: 0; }
select { appearance: none; width: 100%; height: 19px; padding-left: 4px; border: 1px solid #aaa; border-radius: 1px; background: #fff; color: #000; font-size: 13px; }
.radios { display: flex; gap: 10px; padding: 10px 0 0 9px; }
.radios label { display: flex; align-items: center; gap: 7px; height: 20px; }
.panel-actions { display: grid; gap: 2px; padding: 12px 20px 11px 18px; }

/* Promo bar */
.promo { flex: none; height: 47px; display: flex; background: #e5e5e5; border-top: 1px solid #c0c0c0; padding-left: 322px; font-size: 14px; font-weight: 700; color: #1f4f94; }
.promo-item { display: flex; align-items: center; justify-content: center; }
.promo-stars { width: 268px; gap: 7px; padding: 0 2px 4px 0; border-left: 1px solid #c0c0c0; border-right: 1px solid #c0c0c0; }
.promo-app { width: 285px; gap: 8px; padding: 2px 2px 0 0; background: #cdcdcd; border-right: 1px solid #bbb; }
.social { margin-left: auto; display: flex; align-items: center; gap: 11px; padding: 0 12px 2px 0; }
.social svg { width: 24px; height: 24px; }
.yt { font-size: 8px; text-anchor: middle; }
.yt-top { fill: #e5e5e5; }
.yt-bot { fill: #888; font-size: 7px; }

/* Taskbar */
.taskbar { flex: none; height: 40px; display: flex; align-items: center; border-top: 1px solid #173450; background: radial-gradient(circle 210px at -22px 200px, transparent 94%, rgba(160, 205, 250, .85) 96% 97%, transparent 99%) 880px 0 / 120px 40px no-repeat, linear-gradient(90deg, #4a86a8 0, #1d6a9e 40px, #2f93c9 130px, #2d9bd6 300px, #2e90cf 620px, #2277c2 800px, #1c5fae 1000px, #1a57a0 1175px, #133f72 1195px, #14376a 100%); box-shadow: inset 0 1px 0 #8fc0e2; }
.taskbar button { display: flex; align-items: center; justify-content: center; }
.start { width: 54px; }
.app { width: 62px; }
.start + .app { margin-left: 4px; }
.task { width: 58px; height: 38px; margin-left: 4px; border: 1px solid #1d4a6b; border-radius: 3px; background: linear-gradient(135deg, #a9d6ee, #59a8d3 50%, #68b5dd); box-shadow: inset 0 0 0 1px #b5dcf0; }
.task.task-active { margin-left: 1px; background: linear-gradient(135deg, #fafdff, #b5dcf0 50%, #d7eef9); }
.tray { margin-left: auto; display: flex; align-items: center; gap: 8px; color: #fff; font-family: "Open Sans", "Noto Sans", sans-serif; font-size: 11px; line-height: 17px; text-align: center; }
.tray svg:first-child { margin-right: 5px; }
.clock { padding: 0 8px 0 6px; }
.show-desktop { width: 14px; height: 38px; border: 1px solid #6f93b8; background: linear-gradient(#56779c, #173a66 50%, #2a5c96); }
```
